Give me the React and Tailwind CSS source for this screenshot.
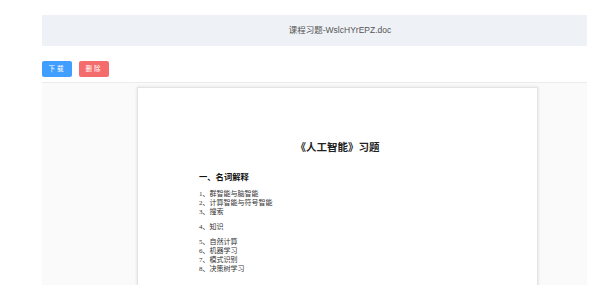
const items1 = ['1、群智能与脑智能', '2、计算智能与符号智能', '3、搜索'];
const items2 = ['5、自然计算', '6、机器学习', '7、模式识别', '8、决策树学习'];

const App = () => {
    return (
        <div className="w-[613px] h-[285px] bg-white overflow-hidden font-['Liberation_Sans','Noto_Sans_CJK_SC',sans-serif]">
            <div className="ml-[42px] w-[545px] pt-[15px]">
                {/* File name bar */}
                <div className="h-[31px] bg-[#eef1f5] flex items-center justify-center pl-[51px] text-[8.5px] text-[#555]">
                    课程习题-WslcHYrEPZ.doc
                </div>

                {/* Actions */}
                <div className="mt-[15px] flex gap-[7px]">
                    <button className="w-[30px] h-[16px] rounded-[2px] bg-[#409eff] text-white text-[6.5px] tracking-[2px] flex items-center justify-center">
                        下载
                    </button>
                    <button className="w-[30px] h-[16px] rounded-[2px] bg-[#f56c6c] text-white text-[6.5px] tracking-[2px] flex items-center justify-center">
                        删除
                    </button>
                </div>

                {/* Preview */}
                <div className="mt-[5px] h-[210px] border-t border-[#ececec] bg-[#fafafa] pt-[4px]">
                    <div className="ml-[95px] w-[401px] h-[210px] bg-white border border-[#e4e4e4] shadow-[0_0_3px_rgba(0,0,0,0.12)] pt-[53px] font-['Liberation_Serif','Noto_Sans_CJK_SC',serif]">
                        <div className="text-center text-[10.5px] leading-[14px] font-bold text-[#222]">
                            《人工智能》习题
                        </div>
                        <div className="pl-[61px]">
                            <div className="mt-[18px] text-[8.3px] leading-[10px] font-bold text-[#111]">
                                一、名词解释
                            </div>
                            <div className="mt-[7px] text-[7px] leading-[9px] text-[#333]">
                                {items1.map((t) => (
                                    <div key={t}>{t}</div>
                                ))}
                                <div className="mt-[5.5px]">4、知识</div>
                                <div className="mt-[6.5px]">
                                    {items2.map((t) => (
                                        <div key={t}>{t}</div>
                                    ))}
                                </div>
                            </div>
                        </div>
                    </div>
                </div>
            </div>
        </div>
    );
};

export default App;
